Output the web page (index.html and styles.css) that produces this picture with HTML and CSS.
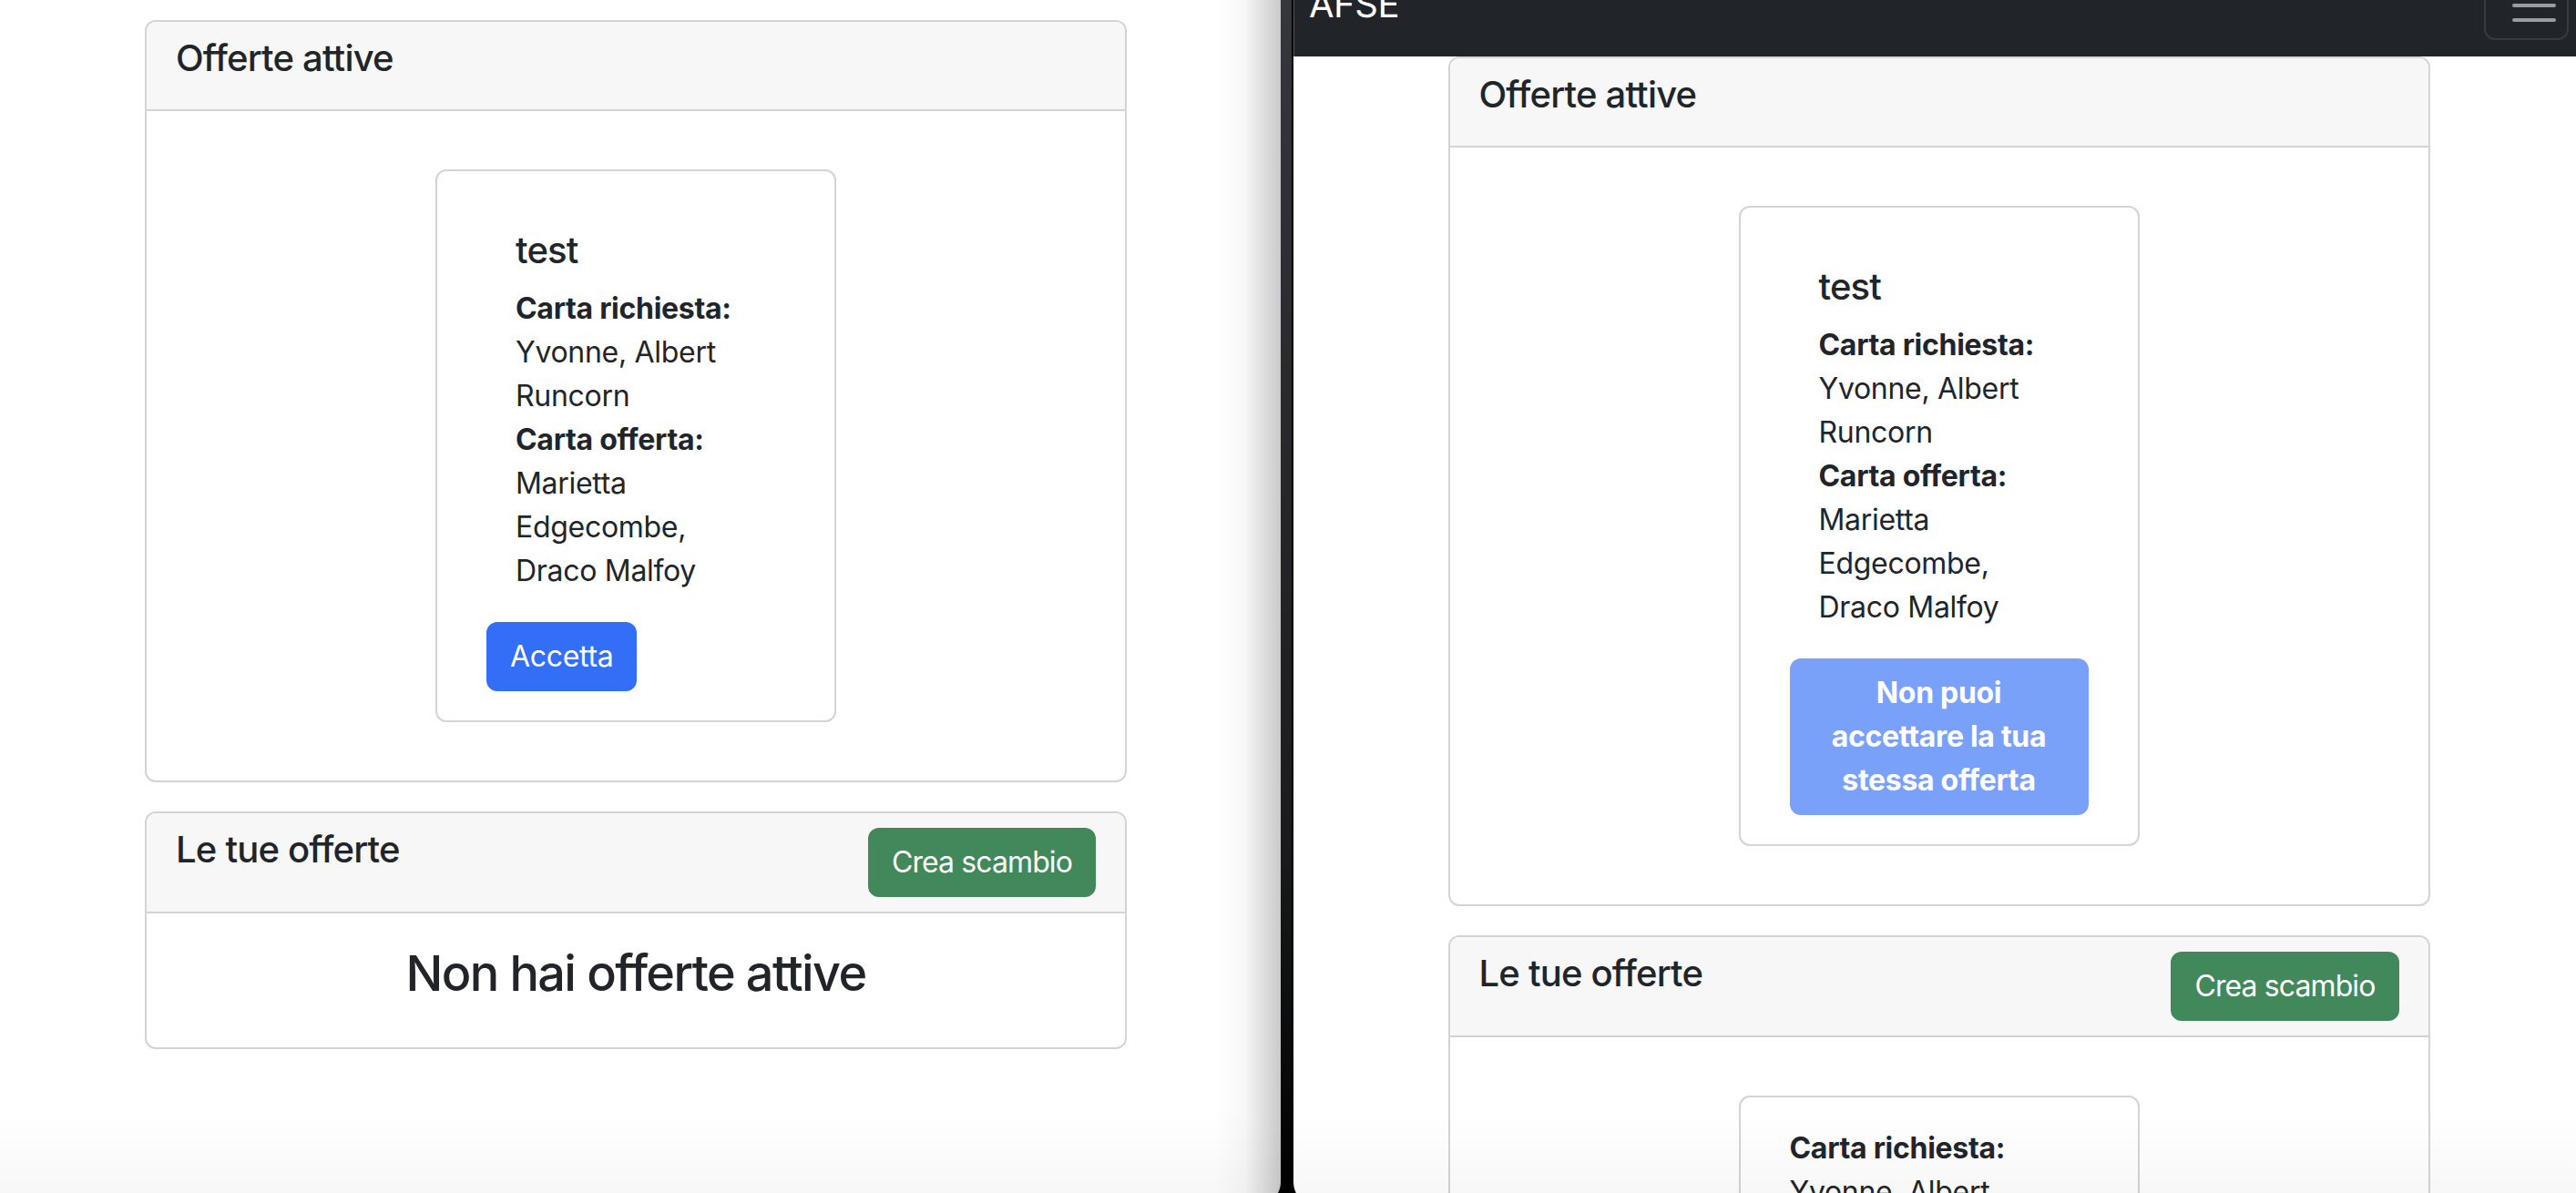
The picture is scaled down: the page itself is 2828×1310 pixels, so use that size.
FILE: index.html
```html
<!DOCTYPE html>
<html lang="it">
<head>
<meta charset="utf-8">
<title>AFSE - Scambi</title>
<link rel="stylesheet" href="styles.css">
</head>
<body>
<div class="desktop">
  <section class="window window-left">
    <main class="page">
      <div class="card">
        <div class="card-header"><h5 class="title">Offerte attive</h5></div>
        <div class="card-body">
          <div class="offer">
            <div class="offer-inner">
              <h5 class="offer-title">test</h5>
              <div class="offer-text">
                <div class="label">Carta richiesta:</div>
                <div>Yvonne, Albert Runcorn</div>
                <div class="label">Carta offerta:</div>
                <div>Marietta Edgecombe, Draco Malfoy</div>
              </div>
            </div>
            <button class="btn btn-primary">Accetta</button>
          </div>
        </div>
      </div>
      <div class="card">
        <div class="card-header header-flex"><h5 class="title">Le tue offerte</h5><button class="btn btn-success">Crea scambio</button></div>
        <div class="card-body"><h3 class="empty">Non hai offerte attive</h3></div>
      </div>
    </main>
    <div class="shade-right"></div>
  </section>
  <div class="gap"></div>
  <section class="window window-right">
    <nav class="navbar">
      <span class="brand">AFSE</span>
      <button class="toggler" aria-label="Menu">
        <svg width="48" height="48" viewBox="0 0 48 48"><path d="M2 8H46M2 24H46M2 40H46" stroke="#9b9c9e" stroke-width="4" stroke-linecap="round" fill="none"/></svg>
      </button>
    </nav>
    <main class="page">
      <div class="card">
        <div class="card-header"><h5 class="title">Offerte attive</h5></div>
        <div class="card-body">
          <div class="offer">
            <div class="offer-inner">
              <h5 class="offer-title">test</h5>
              <div class="offer-text">
                <div class="label">Carta richiesta:</div>
                <div>Yvonne, Albert Runcorn</div>
                <div class="label">Carta offerta:</div>
                <div>Marietta Edgecombe, Draco Malfoy</div>
              </div>
            </div>
            <button class="btn btn-primary btn-disabled" disabled>Non puoi accettare la tua stessa offerta</button>
          </div>
        </div>
      </div>
      <div class="card">
        <div class="card-header header-flex"><h5 class="title">Le tue offerte</h5><button class="btn btn-success">Crea scambio</button></div>
        <div class="card-body">
          <div class="offer">
            <div class="offer-text">
              <div class="label">Carta richiesta:</div>
              <div>Yvonne, Albert Runcorn</div>
              <div class="label">Carta offerta:</div>
              <div>Marietta Edgecombe, Draco Malfoy</div>
            </div>
          </div>
        </div>
      </div>
    </main>
  </section>
</div>
</body>
</html>
```
FILE: styles.css
```css
* { box-sizing: border-box; }
html, body { margin: 0; padding: 0; }
body {
  overflow: hidden;
  font-family: Inter, "Liberation Sans", sans-serif;
  color: #212529;
  font-size: 32px;
  line-height: 48px;
  background: #000;
}
.desktop {
  display: flex;
  height: 1310px;
  overflow: hidden;
  background: linear-gradient(#34373c, #1a1b1e 70%, #000);
}
.window {
  position: relative;
  flex: none;
  height: 1322px;
  background: #fff;
  overflow: hidden;
}
.window::after {
  content: "";
  position: absolute;
  left: 0; right: 0; bottom: 0;
  height: 100px;
  background: linear-gradient(rgba(0,0,0,0), rgba(0,0,0,0.035));
  pointer-events: none;
}
.window-left {
  width: 1406px;
  border-bottom-right-radius: 24px;
}
.window-left .page {
  width: 1396px;
  padding-top: 22px;
}
.shade-right {
  position: absolute;
  top: 0; right: 0; bottom: 0;
  width: 72px;
  background: linear-gradient(to right, rgba(0,0,0,0), rgba(0,0,0,0.03) 45%, rgba(0,0,0,0.21));
  pointer-events: none;
}
.gap {
  flex: none;
  width: 12px;
}
.window-right {
  width: 1419px;
  border-left: 2px solid #000;
  border-bottom-left-radius: 24px;
}

/* navbar */
.navbar {
  height: 62px;
  background: #212529;
  border-left: 1px solid #55585d;
  display: flex;
  justify-content: space-between;
  align-items: flex-start;
  padding: 0 17px 0 16px;
}
.brand {
  display: block;
  color: #fff;
  font-size: 40px;
  line-height: 48px;
  margin-top: -19px;
  letter-spacing: -0.5px;
}
.toggler {
  display: block;
  margin-top: -32px;
  padding: 12px 12px 12px 29px;
  border: 2px solid rgba(255,255,255,0.1);
  border-radius: 12px;
  background: transparent;
  line-height: 0;
}
.toggler svg { display: block; }

/* cards */
.card {
  width: 1078px;
  margin: 0 auto 32px;
  border: 2px solid #d4d4d4;
  border-radius: 12px;
  background: #fff;
}
.card-header {
  background: #f7f7f7;
  padding: 16px 32px;
  border-bottom: 2px solid #d4d4d4;
  border-radius: 10px 10px 0 0;
}
.header-flex {
  display: flex;
  justify-content: space-between;
  align-items: flex-start;
}
.title, .offer-title {
  margin: 0 0 16px;
  font-size: 40px;
  line-height: 48px;
  font-weight: 500;
  letter-spacing: -0.8px;
}
.card-body {
  padding: 32px;
}
.offer {
  width: 440px;
  margin: 32px auto;
  border: 2px solid #d4d4d4;
  border-radius: 12px;
  padding: 32px 54px 32px;
}
.offer-inner {
  padding: 31px 32px 0;
}
.offer-text {
  margin-bottom: 32px;
  letter-spacing: -0.3px;
}
.label { font-weight: 700; }
.empty {
  margin: 0 0 16px;
  text-align: center;
  font-size: 54px;
  line-height: 67px;
  font-weight: 500;
  letter-spacing: -1.6px;
}

/* buttons */
.btn {
  display: inline-block;
  font-family: inherit;
  font-size: 32px;
  line-height: 48px;
  padding: 12px 24px;
  border: 2px solid transparent;
  border-radius: 12px;
  color: #fff;
  letter-spacing: -0.3px;
  text-align: center;
}
.btn-primary { background: #326ff6; border-color: #326ff6; }
.btn-success { background: #41885a; border-color: #41885a; letter-spacing: -0.9px; }
.btn-disabled {
  background: #7aa1f9;
  border-color: #7aa1f9;
  font-weight: 700;
  width: 100%;
}
```
